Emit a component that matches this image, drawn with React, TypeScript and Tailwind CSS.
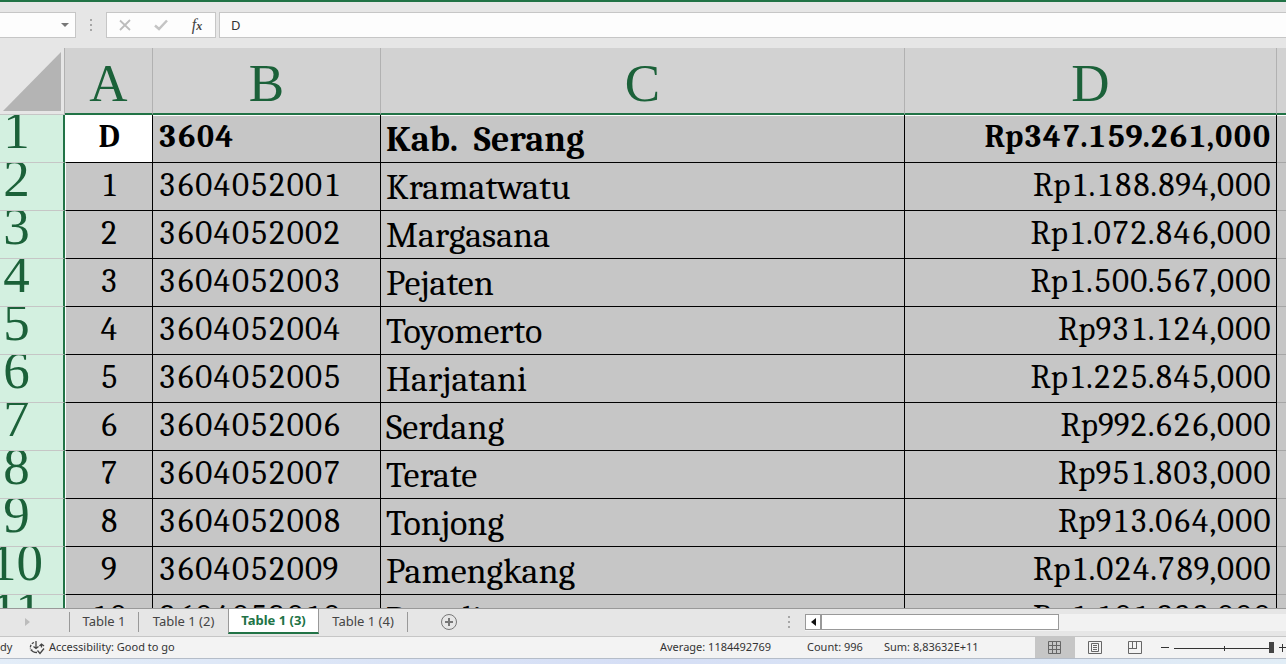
import React, { useState } from 'react'

interface VillageRow {
  no: string
  code: string
  name: string
  amount: string
  bold?: boolean
}

const rows: VillageRow[] = [
  { no: 'D', code: '3604', name: 'Kab.  Serang', amount: 'Rp347.159.261,000', bold: true },
  { no: '1', code: '3604052001', name: 'Kramatwatu', amount: 'Rp1.188.894,000' },
  { no: '2', code: '3604052002', name: 'Margasana', amount: 'Rp1.072.846,000' },
  { no: '3', code: '3604052003', name: 'Pejaten', amount: 'Rp1.500.567,000' },
  { no: '4', code: '3604052004', name: 'Toyomerto', amount: 'Rp931.124,000' },
  { no: '5', code: '3604052005', name: 'Harjatani', amount: 'Rp1.225.845,000' },
  { no: '6', code: '3604052006', name: 'Serdang', amount: 'Rp992.626,000' },
  { no: '7', code: '3604052007', name: 'Terate', amount: 'Rp951.803,000' },
  { no: '8', code: '3604052008', name: 'Tonjong', amount: 'Rp913.064,000' },
  { no: '9', code: '3604052009', name: 'Pamengkang', amount: 'Rp1.024.789,000' },
  { no: '10', code: '3604052010', name: 'Pegadingan', amount: 'Rp1.101.988,000' }
]

const columns = ['A', 'B', 'C', 'D']
const tabs = ['Table 1', 'Table 1 (2)', 'Table 1 (3)', 'Table 1 (4)']

const Grip = () => (
  <svg width="2" height="12" viewBox="0 0 2 12" fill="#a6a6a6" shapeRendering="crispEdges">
    <rect width="2" height="2" />
    <rect y="5" width="2" height="2" />
    <rect y="10" width="2" height="2" />
  </svg>
)

const FormulaBar = () => {
  const [value, setValue] = useState('D')

  return (
    <div className="flex h-[46px] shrink-0 items-start pt-[10px]">
      <button aria-label="Name box" className="flex h-[26px] w-[76px] items-center justify-end border border-l-0 border-[#c6c6c6] bg-[#fdfdfd] pr-1.5">
        <svg width="8" height="4" viewBox="0 0 8 4" fill="#777">
          <path d="M0 0h8L4 4z" />
        </svg>
      </button>
      <div className="flex h-[26px] w-[30px] items-center justify-center">
        <Grip />
      </div>
      <div className="flex h-[26px] w-[110px] items-center border border-[#c6c6c6] bg-[#fdfdfd]">
        <button aria-label="Cancel" className="flex flex-1 justify-center">
          <svg width="12" height="12" viewBox="0 0 12 12" fill="none" stroke="#bdbdbd" strokeWidth="1.800">
            <path d="M1 1.500l10 9.500M11 1L1 11" />
          </svg>
        </button>
        <button aria-label="Enter" className="flex flex-1 justify-center">
          <svg width="14" height="12" viewBox="0 0 14 12" fill="none" stroke="#c4c4c4" strokeWidth="2.500">
            <path d="M1 6.500l4 3.500L13 1.500" />
          </svg>
        </button>
        <button aria-label="Insert function" className="flex flex-1 items-baseline justify-center font-['Liberation_Serif',serif] text-base leading-5 text-[#444] italic">
          f<span className="text-xs font-bold">x</span>
        </button>
      </div>
      <input
        aria-label="Formula"
        value={value}
        onChange={(e) => setValue(e.target.value)}
        className="ml-[3px] h-[26px] min-w-0 flex-1 border border-r-0 border-[#c6c6c6] bg-[#fdfdfd] px-[11px] text-[13px] text-[#333] outline-none"
      />
    </div>
  )
}

const Sheet = () => (
  <div className="min-h-0 flex-1 overflow-hidden border-b border-[#999] bg-[#c6c6c6]">
    <table className="w-full table-fixed border-separate border-spacing-0 font-['Liberation_Serif',serif] text-black">
      <colgroup>
        <col className="w-[65px]" />
        <col className="w-[88px]" />
        <col className="w-[228px]" />
        <col className="w-[524px]" />
        <col className="w-[372px]" />
        <col />
      </colgroup>
      <thead>
        <tr className="h-[67px] text-[53px] leading-[70px] text-[#1b6139]">
          <th className="border-r border-b border-r-[#b1b1b1] border-b-[#c6c6c6] bg-[#e6e6e6] p-0">
            <svg className="ml-[3px]" width="58" height="59" viewBox="0 0 58 59" fill="#b4b4b4">
              <path d="M58 0v59H0z" />
            </svg>
          </th>
          {columns.map((c) => (
            <th key={c} scope="col" className="border-r border-b-2 border-r-[#b1b1b1] border-b-[#217346] bg-[#d2d2d2] p-0 font-normal">
              <div className="h-[65px]">{c}</div>
            </th>
          ))}
          <th className="border-b-2 border-[#217346] bg-[#d2d2d2] p-0" />
        </tr>
      </thead>
      <tbody className="font-['Cambria','Caladea','Liberation_Serif',serif] leading-[44px] tabular-nums">
        {rows.map((row, i) => {
          const top = i === 0 ? 'shadow-[inset_0_1px_0_white]' : ''
          const cell = `border-r border-b border-black p-0 ${top}`
          return (
            <tr key={row.code} className={row.bold ? 'text-[32px] font-bold' : 'text-[33px]'}>
              <th scope="row" className="border-r-2 border-b border-r-[#217346] border-b-[#c6c6c6] bg-[#d3f0e0] p-0 font-['Liberation_Serif',serif] font-normal text-[#1b6139]">
                <div className="h-[47px] overflow-hidden text-[53px] leading-[31px]">
                  <div className="flex w-[33px] justify-center">{i + 1}</div>
                </div>
              </th>
              <td className={`${cell} border-l border-l-white text-center ${i === 0 ? 'bg-white' : ''}`}>
                <div className="h-[47px]">{row.no}</div>
              </td>
              <td className={cell}>
                <div className="h-[47px] pl-[5px]">{row.code}</div>
              </td>
              <td className={cell}>
                <div className="h-[47px] pl-[5px] text-[36px] leading-[50px] whitespace-pre">{row.name}</div>
              </td>
              <td className={`${cell} text-right`}>
                <div className="h-[47px] pr-[5px]">{row.amount}</div>
              </td>
              <td className={`border-b border-[#a6a6a6] p-0 ${top}`} />
            </tr>
          )
        })}
      </tbody>
    </table>
  </div>
)

const SheetTabs = () => {
  const [active, setActive] = useState(2)

  return (
    <div className="flex h-[27px] shrink-0 items-start text-[13px] text-[#444]">
      <button aria-label="Next sheet" className="flex h-[25px] w-[69px] items-center pl-[25px]">
        <svg width="5" height="8" viewBox="0 0 5 8" fill="#bcbcbc">
          <path d="M0 0l5 4-5 4z" />
        </svg>
      </button>
      <div className="flex h-[25px] items-center">
        {tabs.map((tab, i) => (
          <button
            key={tab}
            onClick={() => setActive(i)}
            className={
              i === active
                ? 'h-[25px] w-[91px] border-x border-b-2 border-x-[#999] border-b-[#217346] bg-white font-bold text-[#217346]'
                : `h-5 ${i === 0 ? 'w-[70px] border-x' : i === active - 1 ? 'w-[89px]' : 'w-[89px] border-r'} border-[#999]`
            }
          >
            {tab}
          </button>
        ))}
      </div>
      <button aria-label="New sheet" className="ml-[33px] flex h-[26px] items-center">
        <svg width="16" height="16" viewBox="0 0 16 16" fill="none" stroke="#777">
          <circle cx="8" cy="8" r="7.500" />
          <path d="M8 4v8M4 8h8" strokeWidth="2" />
        </svg>
      </button>
      <div className="flex-1" />
      <div className="flex h-[26px] w-[17px] items-center">
        <Grip />
      </div>
      <div className="mt-[5px] flex h-[17px] w-[481px] bg-[#f2f2f2]">
        <button aria-label="Scroll left" className="flex h-4 w-4 items-center justify-center border border-[#999] bg-white">
          <svg width="5" height="8" viewBox="0 0 5 8" fill="#111">
            <path d="M5 0v8L0 4z" />
          </svg>
        </button>
        <div className="h-4 w-[238px] border border-[#999] bg-white" />
      </div>
    </div>
  )
}

const StatusBar = () => {
  const [zoom, setZoom] = useState(400)

  return (
    <div className="flex h-[23px] shrink-0 items-center border-y border-t-[#c6c6c6] border-b-[#b4bcc8] bg-[#f3f3f3] text-[11px] text-[#333]">
      <span className="w-[29px]">dy</span>
      <svg className="mr-1" width="16" height="15" viewBox="0 0 16 15" fill="none" stroke="#444" strokeWidth="1.300">
        <path d="M5 2.500A5.500 5.500 0 0 0 1.500 9" strokeDasharray="2.500 1.200" />
        <path d="M2 9.500Q3.500 12.500 8 12.500M4.500 6.500L7 8.500l2.500-2M7 1v7M3.500 10.500l-1.800-.5" />
        <path d="M12.500 4.500v3M10.500 6l2-2 2.500 2M8.500 10.500l2.500 3 4-5" />
      </svg>
      <span>Accessibility: Good to go</span>
      <div className="flex-1" />
      <span className="w-[147px]">Average: 1184492769</span>
      <span className="w-[77px]">Count: 996</span>
      <span className="w-[151px]">Sum: 8,83632E+11</span>
      <button aria-label="Normal" className="flex h-[21px] w-10 items-center justify-center bg-[#c6c6c6]">
        <svg width="14" height="13" viewBox="0 0 14 13" fill="none" stroke="#666">
          <path d="M.5.5h12v12H.5zM4.500 0v13M8.500 0v13M0 4.500h13M0 8.500h13" />
        </svg>
      </button>
      <button aria-label="Page layout" className="flex h-[21px] w-10 items-center justify-center">
        <svg width="14" height="13" viewBox="0 0 14 13" fill="none" stroke="#666">
          <path d="M.5.5h13v12H.5zM3.500 2.500h7v8h-7zM5 4.500h4M5 6.500h4M5 8.500h4" />
        </svg>
      </button>
      <button aria-label="Page break preview" className="flex h-[21px] w-10 items-center justify-center">
        <svg width="14" height="13" viewBox="0 0 14 13" fill="none" stroke="#666">
          <path d="M.5.5h13v12H.5zM4.500 0v7M8.500 0v7M0 7.500h9" />
        </svg>
      </button>
      <button aria-label="Zoom out" className="ml-1.5 flex w-[13px]">
        <svg width="8" height="8" viewBox="0 0 8 8" stroke="#333">
          <path d="M0 3.500h8" />
        </svg>
      </button>
      <div className="grid h-3 w-[100px] items-center">
        <svg className="col-start-1 row-start-1" width="100" height="6" viewBox="0 0 100 6" stroke="#333">
          <path d="M0 3.500h97M50.500 1v5" />
        </svg>
        <input
          type="range"
          aria-label="Zoom"
          min="10"
          max="400"
          value={zoom}
          onChange={(e) => setZoom(Number(e.target.value))}
          className="col-start-1 row-start-1 h-3 w-full appearance-none bg-transparent [&::-webkit-slider-thumb]:h-[11px] [&::-webkit-slider-thumb]:w-[5px] [&::-webkit-slider-thumb]:appearance-none [&::-webkit-slider-thumb]:bg-[#444]"
        />
      </div>
      <button aria-label="Zoom in" className="flex w-3 overflow-hidden pl-[5px]">
        <svg className="shrink-0" width="8" height="8" viewBox="0 0 8 8" stroke="#333">
          <path d="M0 3.500h8M3.500 0v8" />
        </svg>
      </button>
    </div>
  )
}

const App: React.FC = () => {
  return (
    <div className="flex h-screen flex-col overflow-hidden border-t-2 border-[#217346] bg-[#e6e6e6] font-['Noto_Sans',sans-serif]">
      <FormulaBar />
      <Sheet />
      <SheetTabs />
      <StatusBar />
      {/* Sliver of desktop below the window */}
      <div className="h-[5px] shrink-0 bg-gradient-to-r from-[#e3edf8] via-[#d5def5] to-[#e1edf6]" />
    </div>
  )
}

export default App
